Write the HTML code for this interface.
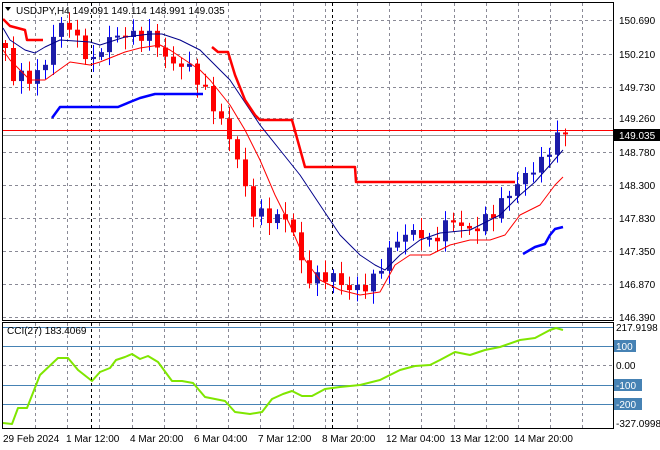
<!DOCTYPE html>
<html><head><meta charset="utf-8"><style>
html,body{margin:0;padding:0;background:#fff;width:660px;height:450px;overflow:hidden}
svg{display:block;font-family:"Liberation Sans",sans-serif}
</style></head><body>
<svg id="s" width="660" height="450" xmlns="http://www.w3.org/2000/svg">
<rect width="660" height="450" fill="#fff"/>
<g id="grid" stroke="#8a8a96" stroke-dasharray="3,3" stroke-width="1"></g>
<g id="cci" fill="none"></g>
<g id="c"></g>
<rect x="2.5" y="2.5" width="611" height="318" fill="none" stroke="#000"/>
<rect x="2.5" y="322.5" width="611" height="106" fill="none" stroke="#000"/>
<g font-size="10" fill="#000" id="lab"></g>
<text x="16" y="14" font-size="10" fill="#000">USDJPY,H4  149.091 149.114 148.991 149.035</text>
<path d="M5,7 L11,7 L8,11 Z" fill="#000"/>
<text x="7" y="334" font-size="10">CCI(27) 183.4069</text>
</svg>
<script>
(function(){
var S='http://www.w3.org/2000/svg';
function el(p,t,a){var e=document.createElementNS(S,t);for(var k in a)e.setAttribute(k,a[k]);p.appendChild(e);return e;}
var g=document.getElementById('grid'),c=document.getElementById('c'),ci=document.getElementById('cci'),lab=document.getElementById('lab');
for(var x=35;x<612;x+=32.2){el(g,'line',{x1:Math.round(x)+.5,y1:3,x2:Math.round(x)+.5,y2:320});el(g,'line',{x1:Math.round(x)+.5,y1:323,x2:Math.round(x)+.5,y2:428});}
var hy=[20,54,87,118,152,185,218,251,284,317];
var hl=['150.690','150.210','149.730','149.260','148.780','148.300','147.830','147.350','146.870','146.390'];
hy.forEach(function(y,i){el(g,'line',{x1:3,y1:y+.5,x2:613,y2:y+.5});var t=el(lab,'text',{x:619,y:y+4});t.textContent=hl[i];});
el(g,'line',{x1:3,y1:365.5,x2:613,y2:365.5});
el(c,'line',{x1:91.5,y1:3,x2:91.5,y2:320,stroke:'#000','stroke-dasharray':'3,3'});
el(c,'line',{x1:91.5,y1:323,x2:91.5,y2:428,stroke:'#000','stroke-dasharray':'3,3'});
el(c,'line',{x1:332.5,y1:3,x2:332.5,y2:320,stroke:'#000','stroke-dasharray':'3,3'});
el(c,'line',{x1:332.5,y1:323,x2:332.5,y2:428,stroke:'#000','stroke-dasharray':'3,3'});
[327,346,385,404].forEach(function(y){el(ci,'line',{x1:3,y1:y+.5,x2:613,y2:y+.5,stroke:'#4682b4'});});
function pl(p,pts,col,w){el(p,'polyline',{points:pts,fill:'none',stroke:col,'stroke-width':w,'stroke-linejoin':'round'});}
pl(ci,'3,423 12,424 18,408 27,408 40,375 58,358 68,358 78,370 92,381 100,372 110,368 116,360 125,357 132,354 140,359 148,356 158,362 172,381 182,381 193,383 205,397 225,401 235,412 250,414 262,412 272,399 283,394 292,391 302,396 312,396 325,389 340,387 360,385 380,380 400,370 415,366 430,365 440,360 455,352 470,355 485,350 500,347 520,340 535,338 550,330 556,328 563,330','#7fe600',2);
el(c,'line',{x1:3,y1:130.5,x2:613,y2:130.5,stroke:'#f00'});
el(c,'line',{x1:3,y1:135.5,x2:613,y2:135.5,stroke:'#999'});
var kp=[[5,48],[10,80],[20,75],[35,80],[45,60],[60,22],[70,28],[80,45],[92,65],[100,48],[115,35],[140,35],[155,38],[165,60],[190,68],[210,100],[235,150],[250,210],[270,218],[290,218],[300,262],[310,280],[330,275],[350,290],[370,285],[385,258],[400,235],[420,232],[430,245],[450,218],[470,232],[490,216],[510,192],[530,170],[545,160],[555,132],[565,134]];
function iy(x){for(var i=1;i<kp.length;i++){if(x<=kp[i][0]){var a=kp[i-1],b=kp[i];return a[1]+(b[1]-a[1])*(x-a[0])/(b[0]-a[0]);}}return kp[kp.length-1][1];}
var prev=iy(5)-5;
for(var i=0;i<71;i++){var x=5+8*i;var cl=iy(x)+Math.sin(i*2.7)*6;if(x>=555)cl=iy(x);
 var op=prev;var hi=Math.min(op,cl)-3-Math.abs(Math.sin(i*1.3))*9,lo=Math.max(op,cl)+3+Math.abs(Math.cos(i*1.7))*10;
 var col=cl<op?'#1c1ca8':'#f00';var lc=cl<op?'#0000ff':'#f00';
 el(c,'line',{x1:x+.5,y1:hi,x2:x+.5,y2:lo,stroke:lc});
 var by=Math.min(op,cl),bh=Math.max(2,Math.abs(op-cl));
 el(c,'rect',{x:x-2,y:by,width:5,height:bh,fill:col});
 prev=cl;}
pl(c,'3,28 10,40 25,50 35,53 45,47 60,40 90,42 100,45 125,37 150,34 162,34 180,40 200,50 230,80 250,110 260,125 280,150 300,175 320,205 340,235 360,255 375,265 385,270 400,255 420,240 440,233 470,230 500,215 520,195 535,182 550,165 563,150','#00008b',1);
pl(c,'3,50 10,60 20,70 30,80 45,80 70,62 90,65 100,62 125,52 140,48 160,45 170,50 200,70 210,80 230,105 245,130 260,160 275,195 290,225 305,260 320,280 340,290 360,295 380,292 395,265 410,255 430,255 450,245 470,240 490,240 505,235 520,215 540,205 555,185 563,177','#f00',1);
pl(c,'3,19 10,26 25,30 27,40 43,40','#f00',2.5);
pl(c,'212,47 218,52 228,52 235,75 245,100 255,115 260,120 292,120 305,167 355,167 356,182 515,182','#f00',2.5);
pl(c,'52,118 60,107 118,107 130,102 140,98 155,94 203,94','#0000ff',2.5);
pl(c,'523,254 535,247 545,244 550,235 555,229 563,227','#0000ff',2.5);
el(lab,'rect',{x:614,y:129,width:46,height:12,fill:'#000'});
var t=el(lab,'text',{x:619,y:139,fill:'#fff'});t.textContent='149.035';
var cl2=[[327,'217.9198',0],[346,'100',1],[365,'0.00',0],[385,'-100',1],[404,'-200',1],[423,'-327.0998',0]];
cl2.forEach(function(a){if(a[2])el(lab,'rect',{x:614,y:a[0]-6,width:a[1].length*6+4,height:12,fill:'#4682b4'});var t=el(lab,'text',{x:616,y:a[0]+4,fill:a[2]?'#fff':'#000'});t.textContent=a[1];});
var d=[[3,'29 Feb 2024'],[66,'1 Mar 12:00'],[130,'4 Mar 20:00'],[194,'6 Mar 04:00'],[258,'7 Mar 12:00'],[322,'8 Mar 20:00'],[386,'12 Mar 04:00'],[450,'13 Mar 12:00'],[514,'14 Mar 20:00']];
d.forEach(function(a){var t=el(lab,'text',{x:a[0],y:442});t.textContent=a[1];});
})();
</script>
</body></html>
